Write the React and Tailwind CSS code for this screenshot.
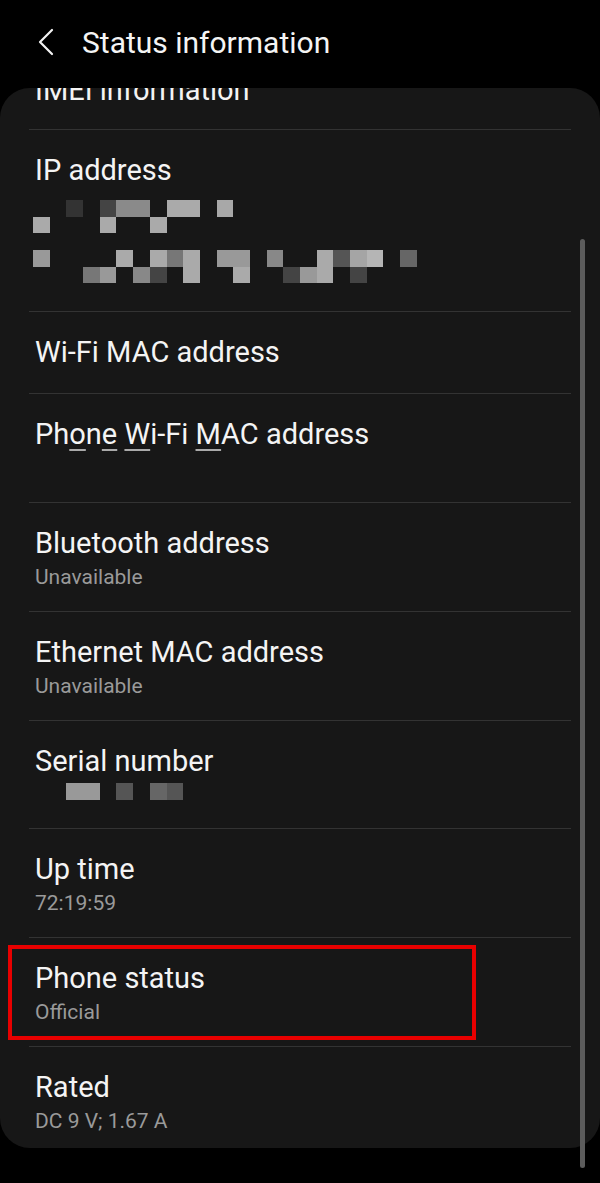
import React from 'react';

// pixelated (blurred) values, one entry per 16.7px cell
const ipMosaic = [
  [null, null, 'bg-[#333]', null, 'bg-[#444]', 'bg-[#8a8a8a]', 'bg-[#8a8a8a]', null, 'bg-[#aaa]', 'bg-[#aaa]', null, 'bg-[#a8a8a8]'],
  ['bg-[#aaa]', null, null, null, 'bg-[#aaa]', null, null, 'bg-[#aaa]'],
  [],
  ['bg-[#999]', null, null, null, null, 'bg-[#aaa]', null, 'bg-[#aaa]', 'bg-[#777]', 'bg-[#aaa]', null, 'bg-[#999]', 'bg-[#999]', null, 'bg-[#888]', null, null, 'bg-[#aaa]', 'bg-[#555]', 'bg-[#a5a5a5]', 'bg-[#b5b5b5]', null, 'bg-[#666]'],
  [null, null, null, 'bg-[#777]', 'bg-[#999]', null, 'bg-[#888]', 'bg-[#444]', null, 'bg-[#aaa]', null, null, 'bg-[#aaa]', null, null, 'bg-[#444]', 'bg-[#999]', 'bg-[#aaa]', null, 'bg-[#444]'],
];

const serialMosaic = [
  [null, null, 'bg-[#999]', 'bg-[#999]', null, 'bg-[#555]', null, 'bg-[#666]', 'bg-[#555]'],
];

const Mosaic = ({ rows }) => (
  <div className="flex flex-col ml-[-2px]">
    {rows.map((row, i) => (
      <div key={i} className="flex h-[16.7px]">
        {row.map((c, j) => (
          <div key={j} className={`w-[16.7px] h-full ${c || ''}`} />
        ))}
      </div>
    ))}
  </div>
);

const Divider = () => <div className="h-px mx-[29px] bg-[#333]" />;

const Title = ({ children }) => (
  <div className="text-[29px] leading-[34px] text-[#f4f4f4]">{children}</div>
);

const Sub = ({ children }) => (
  <div className="mt-1 text-[21px] leading-[26px] text-[#9a9a9a] h-[26px]">{children}</div>
);

const Row = ({ title, sub, className = 'pb-[21px]' }) => (
  <div className={`px-[35px] pt-[23px] ${className}`}>
    <Title>{title}</Title>
    {sub !== undefined && <Sub>{sub}</Sub>}
  </div>
);

const Mark = ({ children }) => (
  <span className="underline decoration-[#aaa] decoration-2 underline-offset-[5px]">{children}</span>
);

export default function App() {
  return (
    <div className="relative w-[600px] h-[1183px] bg-black overflow-hidden" style={{ fontFamily: 'Roboto, "Liberation Sans", sans-serif' }}>
      {/* top bar */}
      <div className="h-[93px] flex items-start pt-[25px]">
        <div className="w-[82px] flex justify-start pl-[37px] pt-[3px]">
          <svg width="18" height="28" viewBox="0 0 18 28" fill="none">
            <path d="M15 2 L3 14 L15 26" stroke="#f2f2f2" strokeWidth="2.2" strokeLinecap="round" strokeLinejoin="round" />
          </svg>
        </div>
        <h1 className="text-[30px] leading-[36px] text-[#f4f4f4]">Status information</h1>
      </div>

      {/* list card */}
      <div className="bg-[#171717] rounded-[30px] h-[1060px]">
        {/* previous item, scrolled mostly out of view */}
        <div className="relative mt-[-5px] h-[41px] px-[35px] overflow-hidden">
          <div className="mt-[-15px] text-[29px] leading-[34px] text-[#f4f4f4]">IMEI information</div>
        </div>
        <Divider />

        <div className="px-[35px] pt-[23px] pb-[28px]">
          <Title>IP address</Title>
          <div className="mt-[13px]">
            <Mosaic rows={ipMosaic} />
          </div>
        </div>
        <Divider />

        <Row title="Wi-Fi MAC address" className="pb-[24px]" />
        <Divider />

        <Row
          title={<>Ph<Mark>o</Mark>n<Mark>e</Mark> <Mark>W</Mark>i-Fi <Mark>M</Mark>AC address</>}
          sub=""
        />
        <Divider />

        <Row title="Bluetooth address" sub="Unavailable" />
        <Divider />

        <Row title="Ethernet MAC address" sub="Unavailable" />
        <Divider />

        <div className="px-[35px] pt-[23px] pb-[28px]">
          <Title>Serial number</Title>
          <div className="mt-[5px]">
            <Mosaic rows={serialMosaic} />
          </div>
        </div>
        <Divider />

        <Row title="Up time" sub="72:19:59" />
        <Divider />

        <div className="relative">
          <Row title="Phone status" sub="Official" />
          <div className="absolute left-[8px] top-[7px] w-[468px] h-[95px] border-[4px] border-[#e80000]" />
        </div>
        <Divider />

        <Row title="Rated" sub="DC 9 V; 1.67 A" className="pb-[19px]" />
      </div>

      {/* scrollbar */}
      <div className="absolute left-[580px] top-[239px] w-[5px] h-[929px] rounded-full bg-[#5c5c5c]" />
    </div>
  );
}
